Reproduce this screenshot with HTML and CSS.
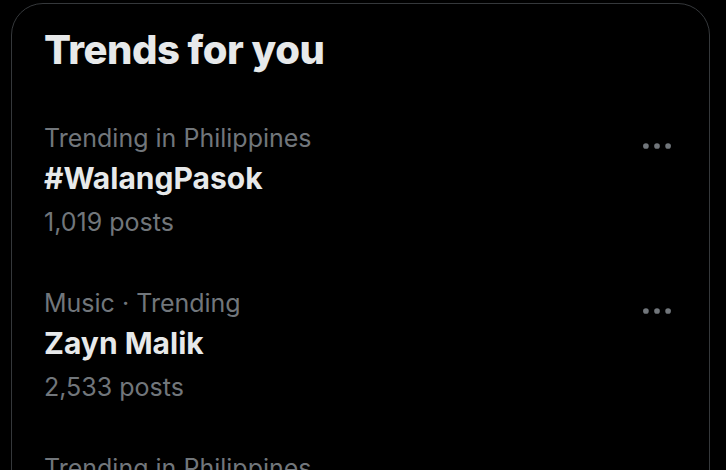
FILE: index.html
```html
<!DOCTYPE html>
<html lang="en">
<head>
<meta charset="utf-8">
<title>Trends for you</title>
<link rel="stylesheet" href="styles.css">
</head>
<body>
<section class="card">
  <h2 class="title">Trends for you</h2>
  <div class="trend">
    <div class="trend-text">
      <div class="meta">Trending in Philippines</div>
      <div class="name">#WalangPasok</div>
      <div class="count">1,019 posts</div>
    </div>
    <button class="more" aria-label="More">
      <svg viewBox="0 0 24 24" width="38" height="38"><circle cx="5" cy="12" r="1.8"/><circle cx="12" cy="12" r="1.8"/><circle cx="19" cy="12" r="1.8"/></svg>
    </button>
  </div>
  <div class="trend">
    <div class="trend-text">
      <div class="meta">Music · Trending</div>
      <div class="name">Zayn Malik</div>
      <div class="count">2,533 posts</div>
    </div>
    <button class="more" aria-label="More">
      <svg viewBox="0 0 24 24" width="38" height="38"><circle cx="5" cy="12" r="1.8"/><circle cx="12" cy="12" r="1.8"/><circle cx="19" cy="12" r="1.8"/></svg>
    </button>
  </div>
  <div class="trend">
    <div class="trend-text">
      <div class="meta">Trending in Philippines</div>
    </div>
  </div>
</section>
</body>
</html>
```

FILE: styles.css
```css
html, body {
  margin: 0;
  padding: 0;
  background: #000;
  height: 100%;
  overflow: hidden;
}
body {
  font-family: Inter, "Noto Sans", sans-serif;
  color: #e7e9ea;
}
.card {
  margin: 3px 0 0 11px;
  width: 699px;
  height: 700px;
  box-sizing: border-box;
  border: 1px solid #35383b;
  border-radius: 32px;
}
.title {
  margin: 0;
  padding: 22px 32px 25px 32px;
  font-size: 40px;
  line-height: 48px;
  font-weight: 800;
  letter-spacing: -0.5px;
  color: #e7e9ea;
}
.trend {
  display: flex;
  justify-content: space-between;
  align-items: flex-start;
  padding: 20px 33px 19px 32px;
  height: 165px;
  box-sizing: border-box;
}
.trend-text {
  display: flex;
  flex-direction: column;
}
.meta {
  font-size: 25px;
  line-height: 38px;
  color: #71767b;
}
.name {
  font-size: 30px;
  line-height: 42px;
  font-weight: 700;
  color: #e7e9ea;
}
.count {
  font-size: 25px;
  line-height: 46px;
  color: #71767b;
}
.more {
  background: none;
  border: 0;
  padding: 0;
  margin: 8px 0 0 0;
  fill: #71767b;
  display: flex;
}
```
